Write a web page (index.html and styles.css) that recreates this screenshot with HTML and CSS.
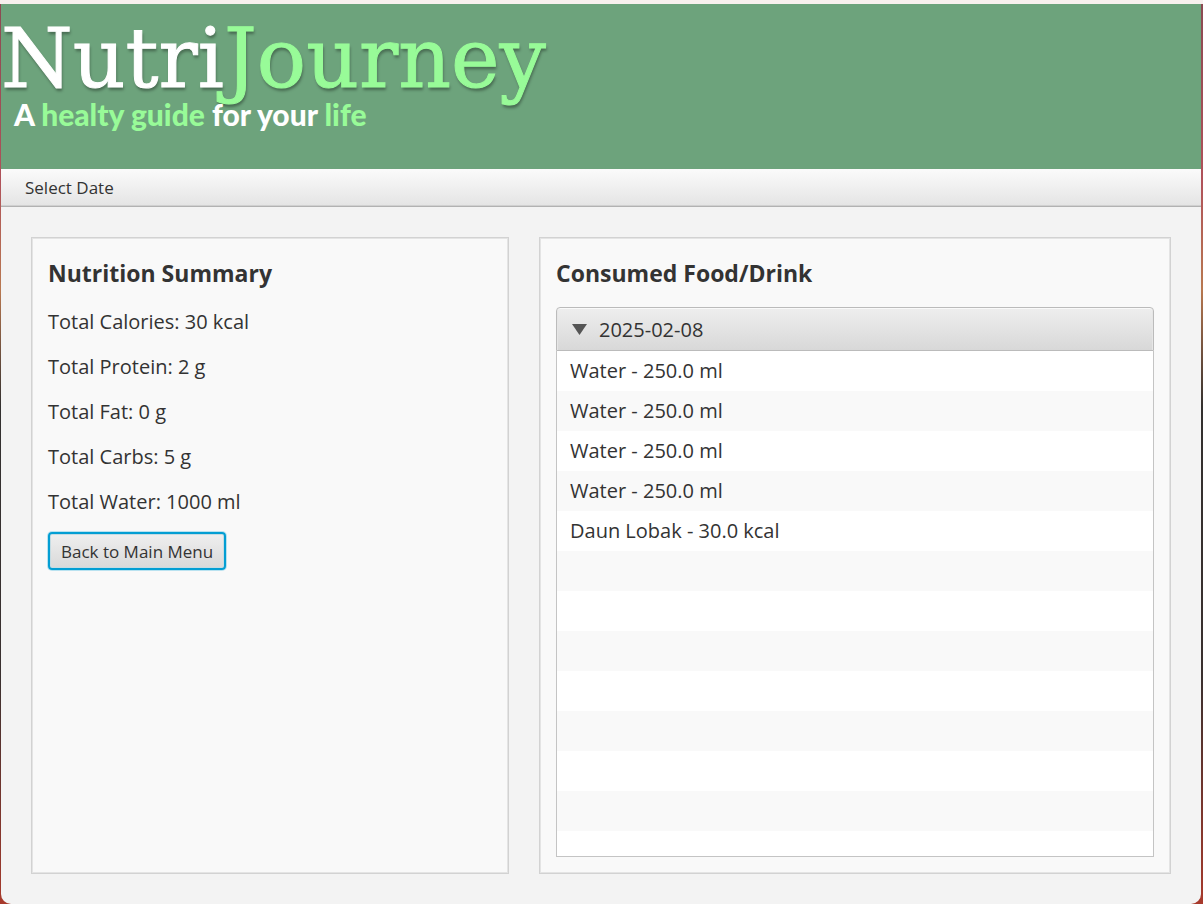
FILE: index.html
```html
<!DOCTYPE html>
<html lang="en">
<head>
<meta charset="utf-8">
<meta name="viewport" content="width=device-width, initial-scale=1">
<title>NutriJourney</title>
<link rel="stylesheet" href="styles.css">
</head>
<body>
<div class="window">
  <header class="banner">
    <h1 class="brand">Nutri<span class="accent">Journey</span></h1>
    <p class="tagline">A <span class="accent">healty guide</span> for your <span class="accent">life</span></p>
  </header>
  <nav class="menu-bar">
    <button class="menu" type="button">Select Date</button>
  </nav>
  <main class="content">
    <section class="panel">
      <h2 class="panel-title">Nutrition Summary</h2>
      <p class="stat">Total Calories: 30 kcal</p>
      <p class="stat">Total Protein: 2 g</p>
      <p class="stat">Total Fat: 0 g</p>
      <p class="stat">Total Carbs: 5 g</p>
      <p class="stat">Total Water: 1000 ml</p>
      <button class="back" type="button">Back to Main Menu</button>
    </section>
    <section class="panel">
      <h2 class="panel-title">Consumed Food/Drink</h2>
      <div class="accordion">
        <button class="accordion-title" type="button" aria-expanded="true" aria-controls="entries">
          <svg class="arrow" viewBox="0 0 15 11" aria-hidden="true"><path d="M0 0H15L7.500 11Z" fill="#555"/></svg>
          2025-02-08
        </button>
        <ul class="entries" id="entries">
          <li class="entry">Water - 250.0 ml</li>
          <li class="entry">Water - 250.0 ml</li>
          <li class="entry">Water - 250.0 ml</li>
          <li class="entry">Water - 250.0 ml</li>
          <li class="entry">Daun Lobak - 30.0 kcal</li>
        </ul>
      </div>
    </section>
  </main>
</div>
</body>
</html>
```
FILE: styles.css
```css
* {
  box-sizing: border-box;
}

body {
  margin: 0;
  padding: 4px 2px 0 1px;
  min-height: 100vh;
  display: flex;
  background:
    linear-gradient(#f8f0ee, #f8f0ee) top / 100% 4px no-repeat,
    linear-gradient(#8a4a52, #b0525a 20%, #b87850 32%, #33302f 45%, #3a302f 75%, #a83a2c);
  color: #333;
  font-family: "Open Sans", "Noto Sans", sans-serif;
  font-size: 20px;
}

h1, h2, p, ul {
  margin: 0;
  padding: 0;
}

button {
  font: inherit;
  color: inherit;
}

.window {
  flex: 1;
  min-width: 0;
  display: flex;
  flex-direction: column;
  background: #f3f3f3;
  border-radius: 0 0 10px 10px;
}

.banner {
  min-height: 165px;
  padding-top: 10px;
  background: #6da37c;
  color: #fff;
}

.brand {
  font-family: "DejaVu Serif", serif;
  font-size: 82px;
  font-weight: 400;
  line-height: 90px;
  white-space: nowrap;
  -webkit-text-stroke: 1px currentColor;
  text-shadow: 1px 3px 3px rgba(0, 0, 0, 0.35);
}

.accent {
  color: #98fb98;
}

.tagline {
  padding-left: 13px;
  font-family: Lato, sans-serif;
  font-size: 30px;
  font-weight: 900;
  line-height: 20px;
}

.menu-bar {
  height: 38px;
  display: flex;
  padding-left: 12px;
  background: linear-gradient(#fbfbfb, #e4e4e4);
  border-bottom: 1px solid #b2b2b2;
  box-shadow: inset 0 -1px #d0d0d0;
}

.menu {
  padding: 0 12px;
  border: 0;
  background: none;
  font-size: 17px;
}

.content {
  flex: 1;
  display: grid;
  grid-template-columns: 478fr 632fr;
  gap: 30px;
  padding: 30px;
}

.panel {
  display: flex;
  flex-direction: column;
  align-items: flex-start;
  gap: 15px;
  padding: 16px;
  background: #f9f9f9;
  border: 1px solid #d2d2d2;
  box-shadow: inset 0 0 0 1px #e4e4e4;
}

.panel-title {
  font-size: 23px;
  font-weight: 700;
  line-height: 38px;
}

.stat {
  line-height: 30px;
}

.back {
  height: 38px;
  padding: 0 11px;
  border: 2px solid #039ed3;
  border-radius: 4px;
  background: linear-gradient(#efefef, #d9d9d9);
  box-shadow: 0 0 0 1px #b9e2f0, inset 0 0 0 1px #c5dce3;
  font-size: 17px;
}

.accordion {
  flex: 1;
  align-self: stretch;
  display: flex;
  flex-direction: column;
}

.accordion-title {
  height: 44px;
  display: flex;
  align-items: center;
  gap: 12px;
  padding: 0 15px;
  border: 1px solid #bbb;
  border-radius: 4px 4px 0 0;
  background: linear-gradient(#eee, #d8d8d8);
  box-shadow: inset 0 1px #fafafa, inset 1px 0 #e6e6e6, inset -1px 0 #e6e6e6;
}

.arrow {
  width: 15px;
  height: 11px;
}

.entries {
  flex: 1;
  list-style: none;
  border: 1px solid #c4c4c4;
  border-top: 0;
  background: repeating-linear-gradient(#fff 0 40px, #f9f9f9 40px 80px);
}

.entry {
  padding-left: 13px;
  line-height: 40px;
}
```
